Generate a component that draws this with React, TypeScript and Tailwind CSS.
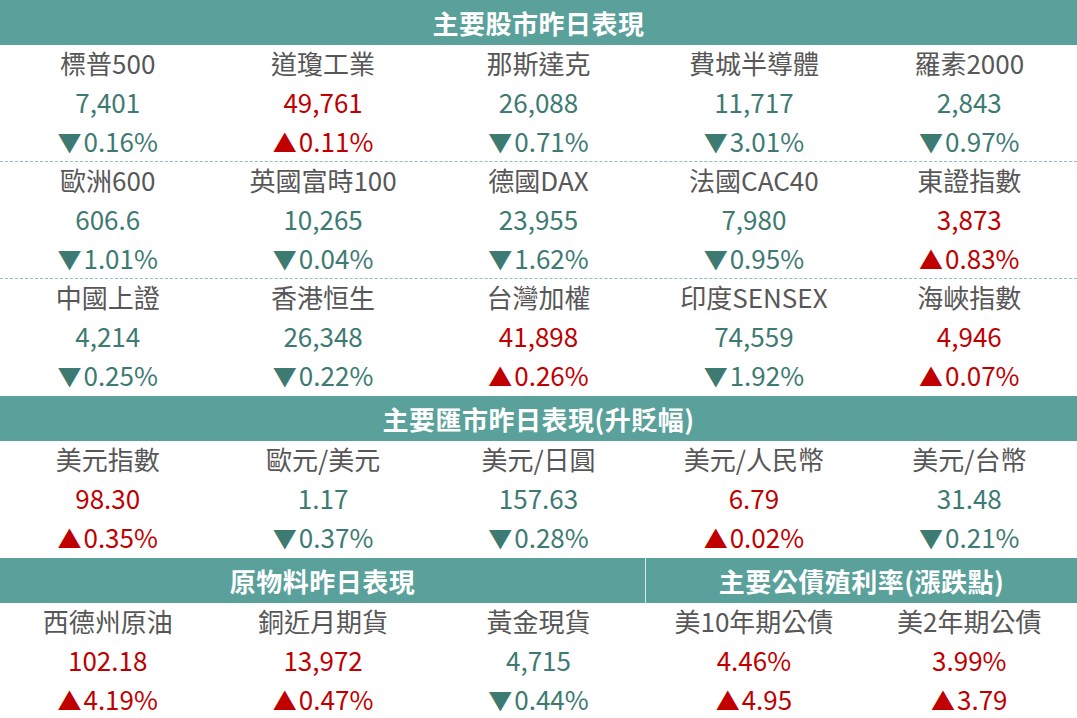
type Cell = { name: string; value: string; change: string; up: boolean };

const stocks: Cell[][] = [
  [
    { name: "標普500", value: "7,401", change: "0.16%", up: false },
    { name: "道瓊工業", value: "49,761", change: "0.11%", up: true },
    { name: "那斯達克", value: "26,088", change: "0.71%", up: false },
    { name: "費城半導體", value: "11,717", change: "3.01%", up: false },
    { name: "羅素2000", value: "2,843", change: "0.97%", up: false },
  ],
  [
    { name: "歐洲600", value: "606.6", change: "1.01%", up: false },
    { name: "英國富時100", value: "10,265", change: "0.04%", up: false },
    { name: "德國DAX", value: "23,955", change: "1.62%", up: false },
    { name: "法國CAC40", value: "7,980", change: "0.95%", up: false },
    { name: "東證指數", value: "3,873", change: "0.83%", up: true },
  ],
  [
    { name: "中國上證", value: "4,214", change: "0.25%", up: false },
    { name: "香港恒生", value: "26,348", change: "0.22%", up: false },
    { name: "台灣加權", value: "41,898", change: "0.26%", up: true },
    { name: "印度SENSEX", value: "74,559", change: "1.92%", up: false },
    { name: "海峽指數", value: "4,946", change: "0.07%", up: true },
  ],
];

const fx: Cell[] = [
  { name: "美元指數", value: "98.30", change: "0.35%", up: true },
  { name: "歐元/美元", value: "1.17", change: "0.37%", up: false },
  { name: "美元/日圓", value: "157.63", change: "0.28%", up: false },
  { name: "美元/人民幣", value: "6.79", change: "0.02%", up: true },
  { name: "美元/台幣", value: "31.48", change: "0.21%", up: false },
];

const commodities: Cell[] = [
  { name: "西德州原油", value: "102.18", change: "4.19%", up: true },
  { name: "銅近月期貨", value: "13,972", change: "0.47%", up: true },
  { name: "黃金現貨", value: "4,715", change: "0.44%", up: false },
  { name: "美10年期公債", value: "4.46%", change: "4.95", up: true },
  { name: "美2年期公債", value: "3.99%", change: "3.79", up: true },
];

function Header({ title }: { title: string }) {
  return (
    <div className="h-[45px] bg-[#59a19a] flex items-center justify-center text-white text-[26px] font-bold tracking-[0.5px]">
      {title}
    </div>
  );
}

function Row({ cells, dashed }: { cells: Cell[]; dashed?: boolean }) {
  return (
    <div
      className={`grid grid-cols-5 h-[117px] ${
        dashed ? "border-b border-dashed border-[#8fc0bb]" : ""
      }`}
    >
      {cells.map((c) => {
        const color = c.up ? "text-[#c00000]" : "text-[#3d7a71]";
        return (
          <div key={c.name} className="flex flex-col items-center -mt-[2px]">
            <div className="h-[39px] leading-[39px] text-[#575757]">{c.name}</div>
            <div className={`h-[39px] leading-[39px] ${color}`}>{c.value}</div>
            <div className={`h-[39px] leading-[39px] flex items-baseline ${color}`}>
              <span className="text-[24px] mr-[2px]">{c.up ? "▲" : "▼"}</span>
              {c.change}
            </div>
          </div>
        );
      })}
    </div>
  );
}

export default function App() {
  return (
    <div
      className="w-[1077px] h-[718px] bg-white overflow-hidden text-[26px]"
      style={{ fontFamily: '"Noto Sans CJK TC", "Noto Sans", sans-serif' }}
    >
      <Header title="主要股市昨日表現" />
      {stocks.map((row, i) => (
        <Row key={i} cells={row} dashed={i < 2} />
      ))}
      <Header title="主要匯市昨日表現(升貶幅)" />
      <Row cells={fx} />
      {/* split header: commodities | bond yields */}
      <div className="flex h-[45px] bg-[#59a19a] text-white text-[26px] font-bold tracking-[0.5px]">
        <div className="w-[646px] flex items-center justify-center border-r border-[#d8ebe9]">
          原物料昨日表現
        </div>
        <div className="flex-1 flex items-center justify-center">主要公債殖利率(漲跌點)</div>
      </div>
      <Row cells={commodities} />
    </div>
  );
}
